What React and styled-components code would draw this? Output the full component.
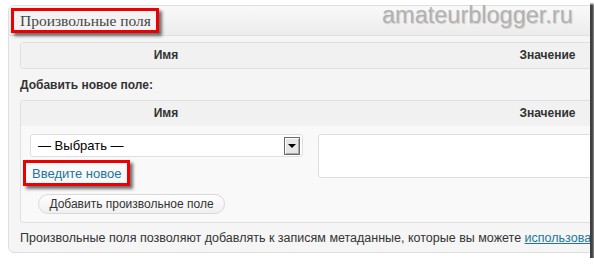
import React from "react";
import styled, { createGlobalStyle } from "styled-components";

const Global = createGlobalStyle`
  html, body { margin: 0; padding: 0; background: #fff; }
  body { font-family: "Liberation Sans", Arial, sans-serif; }
`;

const Frame = styled.div`
  position: relative;
  width: 590px;
  height: 258px;
  background: #fff;
  overflow: hidden;
  box-shadow: 4px 4px 2px rgba(30, 30, 30, 0.85);
`;

const Watermark = styled.div`
  position: absolute;
  top: 2px;
  left: 382px;
  font-family: "Liberation Sans", Arial, sans-serif;
  font-size: 23.5px;
  color: #b2b2b2;
  text-shadow: 1px 1px 1px rgba(0, 0, 0, 0.15);
  z-index: 3;
`;

const Panel = styled.div`
  margin: 5px 0 0 8px;
  width: 800px;
  height: 248px;
  border: 1px solid #dfdfdf;
  border-radius: 6px;
  background: #f5f5f5;
  box-sizing: border-box;
`;

const Header = styled.div`
  height: 30px;
  border-bottom: 1px solid #dfdfdf;
  background: linear-gradient(#f9f9f9, #ececec);
  border-radius: 6px 6px 0 0;
  display: flex;
  align-items: center;
  padding-left: 2px;
  box-sizing: border-box;
`;

const Highlight = styled.span`
  display: inline-block;
  border: 3px solid #ee0000;
  box-shadow: 3px 3px 3px rgba(0, 0, 0, 0.55);
`;

const Title = styled(Highlight)`
  font-family: "Liberation Serif", Georgia, serif;
  font-size: 15.5px;
  color: #464646;
  padding: 0 5px 0 6px;
  height: 19px;
  line-height: 19px;
  background: #f3f3f3;
`;

const Inside = styled.div`
  padding: 6px 11px 0 11px;
`;

const Table = styled.div`
  width: 763px;
  border: 1px solid #dfdfdf;
  border-radius: 3px;
  display: grid;
  grid-template-columns: 290px 473px;
  background: #f9f9f9;
  box-sizing: border-box;
`;

const Th = styled.div`
  height: 25px;
  line-height: 25px;
  background: #f1f1f1;
  font-weight: bold;
  font-size: 12px;
  color: #333;
  text-align: center;
`;

const SubHeading = styled.div`
  font-weight: bold;
  font-size: 12px;
  color: #333;
  margin: 9px 0 8px 0;
  height: 14px;
  line-height: 14px;
`;

const NameCell = styled.div`
  padding: 8px 0 0 9px;
  display: flex;
  flex-direction: column;
  align-items: flex-start;
`;

const ValueCell = styled.div`
  padding: 8px 0 0 7px;
`;

const Select = styled.div`
  width: 273px;
  height: 23px;
  box-sizing: border-box;
  border: 1px solid #dfdfdf;
  border-radius: 3px;
  background: #fff;
  display: flex;
  align-items: center;
  justify-content: space-between;
  padding: 0 2px 0 7px;
  font-size: 13px;
  color: #000;
`;

const DropButton = styled.div`
  width: 16px;
  height: 18px;
  box-sizing: border-box;
  border: 1px solid #6a6a6a;
  background: #e6e6e6;
  box-shadow: inset 1px 1px 0 #fff, inset -1px -1px 0 #a8a8a8;
  display: flex;
  align-items: center;
  justify-content: center;
  &::after {
    content: "";
    border-left: 4px solid transparent;
    border-right: 4px solid transparent;
    border-top: 4px solid #000;
  }
`;

const LinkBox = styled(Highlight)`
  margin: 3px 0 0 -7px;
  padding: 0 5px 0 6px;
  height: 20px;
  line-height: 20px;
`;

const Link = styled.a`
  color: #21759b;
  font-size: 13px;
  text-decoration: none;
`;

const AddButton = styled.button`
  margin: 8px 0 8px 8px;
  height: 20px;
  width: 187px;
  padding: 0;
  border: 1px solid #d9d9d9;
  border-radius: 11px;
  background: linear-gradient(#fefefe, #f0f0f0);
  font-family: "Liberation Sans", Arial, sans-serif;
  font-size: 12px;
  color: #333;
`;

const Textarea = styled.div`
  height: 44px;
  box-sizing: border-box;
  border: 1px solid #dfdfdf;
  border-radius: 3px;
  background: #fff;
  width: 460px;
`;

const Note = styled.p`
  margin: 7px 0 0 0;
  font-size: 12.5px;
  color: #333;
  white-space: nowrap;
  line-height: 16px;
`;

const NoteLink = styled.a`
  color: #21759b;
  text-decoration: underline;
`;

export default function App() {
  return (
    <>
      <Global />
      <Frame>
        <Watermark>amateurblogger.ru</Watermark>
        <Panel>
          <Header>
            <Title>Произвольные поля</Title>
          </Header>
          <Inside>
            <Table>
              <Th>Имя</Th>
              <Th>Значение</Th>
            </Table>
            <SubHeading>Добавить новое поле:</SubHeading>
            <Table>
              <Th>Имя</Th>
              <Th>Значение</Th>
              <NameCell>
                <Select>
                  <span>— Выбрать —</span>
                  <DropButton />
                </Select>
                <LinkBox>
                  <Link href="#">Введите новое</Link>
                </LinkBox>
                <AddButton>Добавить произвольное поле</AddButton>
              </NameCell>
              <ValueCell>
                <Textarea />
              </ValueCell>
            </Table>
            <Note>
              Произвольные поля позволяют добавлять к записям метаданные, которые вы можете{" "}
              <NoteLink href="#">использовать в своей теме</NoteLink>.
            </Note>
          </Inside>
        </Panel>
      </Frame>
    </>
  );
}
